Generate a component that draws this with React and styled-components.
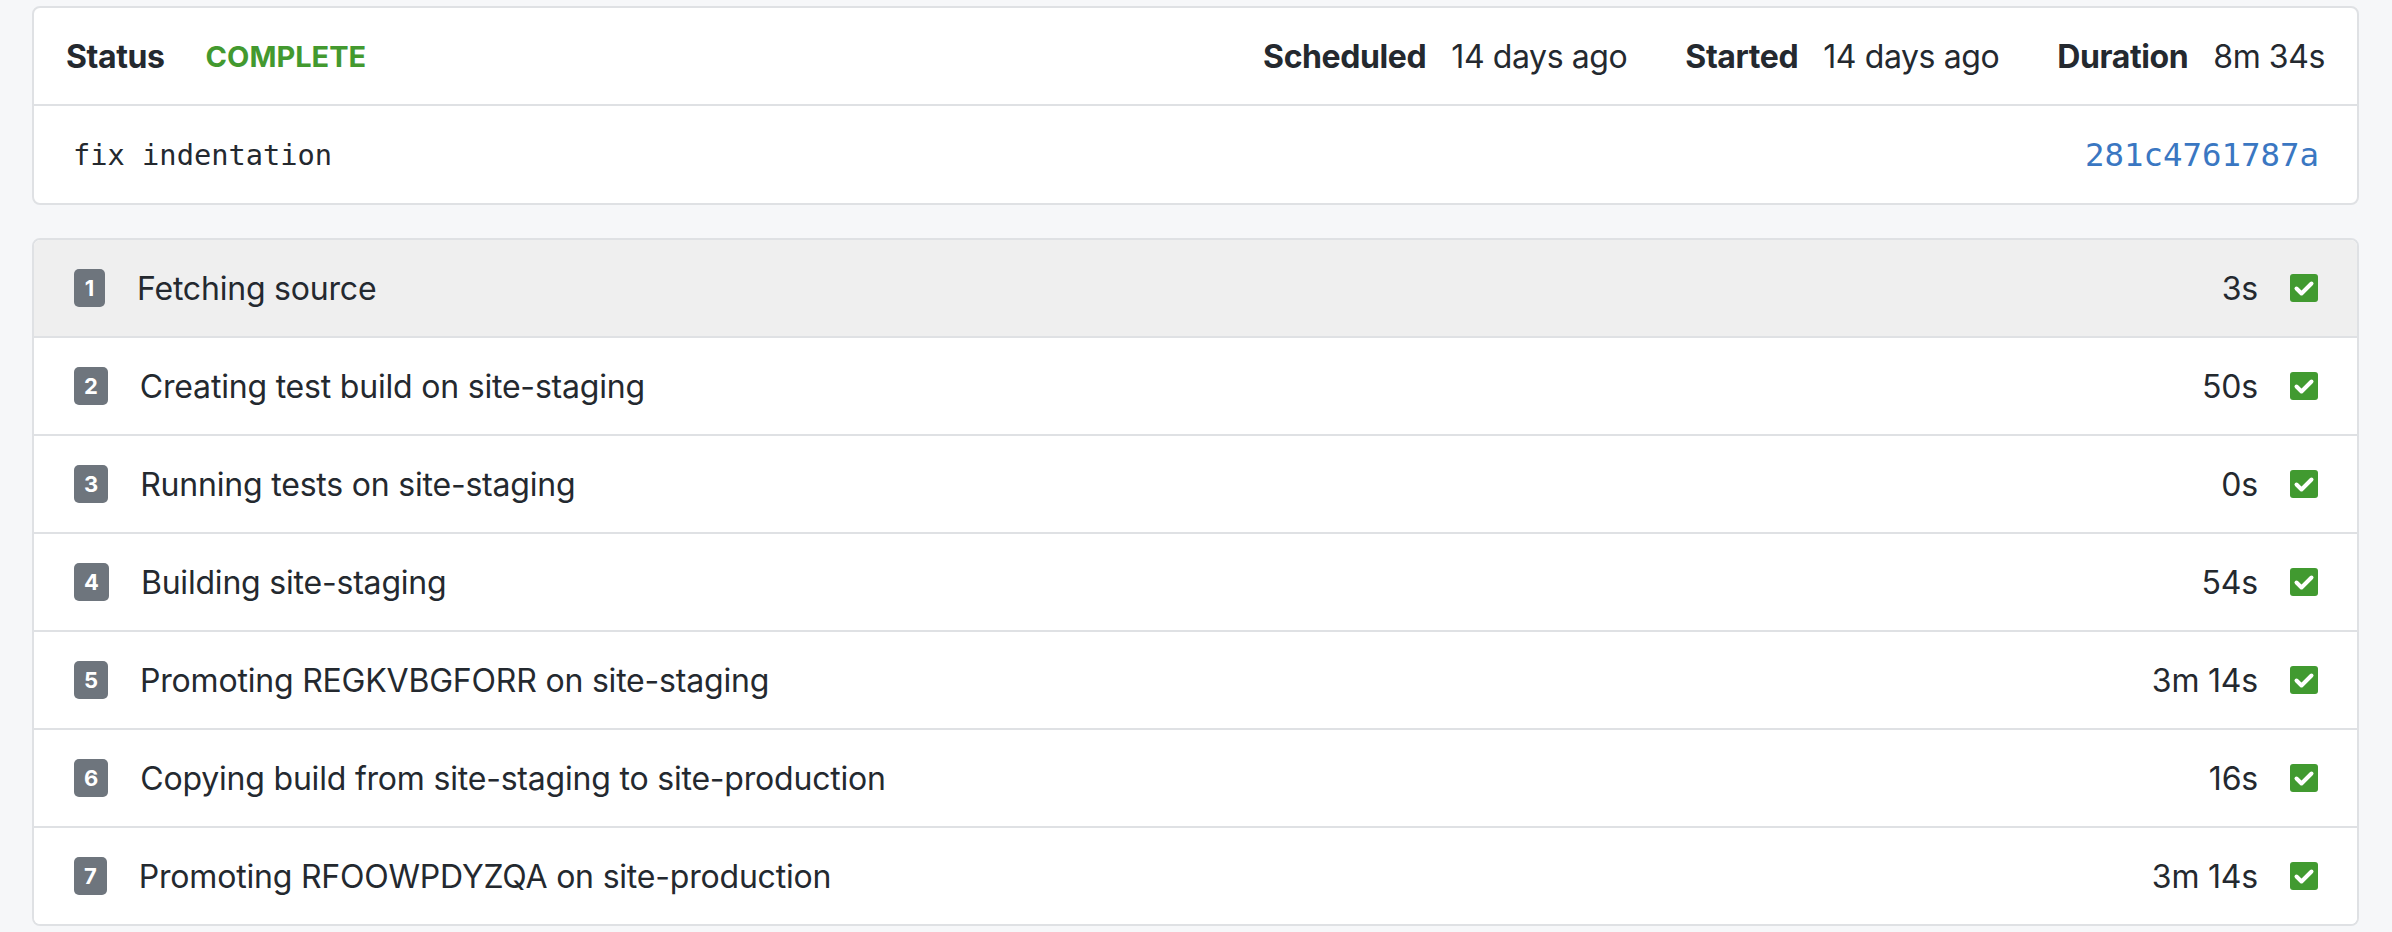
import React from 'react'
import styled, { createGlobalStyle } from 'styled-components'

const GlobalStyle = createGlobalStyle`
  body {
    margin: 0;
    background: #f6f7f9;
    font-family: Inter, "Noto Sans", "Liberation Sans", sans-serif;
    color: #24292f;
  }
`

const Page = styled.div`
  display: flex;
  flex-direction: column;
  gap: 33px;
  padding: 6px 33px 0 32px;
`

const Card = styled.div`
  background: #fff;
  border: 2px solid #dfe1e4;
  border-radius: 8px;
  overflow: hidden;
`

const SummaryRow = styled.div`
  display: flex;
  align-items: center;
  height: 96px;
  padding: 0 32px;
  border-bottom: 2px solid #dfe1e4;
  font-size: 32px;
  letter-spacing: -0.4px;
`

const Fields = styled.div`
  display: flex;
  align-items: center;
  gap: 58px;
  margin-left: auto;
`

const Field = styled.div`
  display: flex;
  align-items: center;
  gap: ${p => p.$gap || 25}px;
`

const Label = styled.span`
  font-weight: 700;
`

const Value = styled.span`
  font-weight: 400;
`

const StatusValue = styled.span`
  color: #43992f;
  font-weight: 700;
  font-size: 29px;
  letter-spacing: 0;
  text-transform: uppercase;
`

const CommitRow = styled.div`
  display: flex;
  align-items: center;
  justify-content: space-between;
  height: 97px;
  padding: 0 32px;
`

const Message = styled.code`
  font-family: "DejaVu Sans Mono", "Liberation Mono", monospace;
  font-size: 28.7px;
  padding: 0 7px;
`

const Hash = styled.a`
  font-family: "DejaVu Sans Mono", "Liberation Mono", monospace;
  font-size: 32.4px;
  color: #3a77c2;
  text-decoration: none;
  padding: 0 6px;
`

const StepRow = styled.div`
  display: flex;
  align-items: center;
  height: 96px;
  padding: 0 39px 0 40px;
  background: ${p => (p.$active ? '#efefef' : '#fff')};
  font-size: 32px;
  letter-spacing: -0.2px;

  & + & {
    border-top: 2px solid #dfe1e4;
  }
`

const Badge = styled.span`
  display: inline-flex;
  align-items: center;
  justify-content: center;
  height: 38px;
  min-width: 31px;
  box-sizing: border-box;
  padding: 0 10px;
  border-radius: 5px;
  background: #6e757d;
  color: #fff;
  font-size: 22px;
  font-weight: 700;
  letter-spacing: 0;
  margin-right: 32px;
`

const StepName = styled.span`
  flex: 1;
`

const Time = styled.span`
  margin-right: 32px;
`

const Check = () => (
  <svg width="28" height="28" viewBox="0 0 28 28">
    <rect width="28" height="28" rx="3" fill="#419a30" />
    <polyline
      points="6.5,14.5 11.5,19.5 21.5,9.5"
      fill="none"
      stroke="#fff"
      strokeWidth="4"
      strokeLinecap="round"
      strokeLinejoin="round"
    />
  </svg>
)

const steps = [
  { name: 'Fetching source', time: '3s' },
  { name: 'Creating test build on site-staging', time: '50s' },
  { name: 'Running tests on site-staging', time: '0s' },
  { name: 'Building site-staging', time: '54s' },
  { name: 'Promoting REGKVBGFORR on site-staging', time: '3m 14s' },
  { name: 'Copying build from site-staging to site-production', time: '16s' },
  { name: 'Promoting RFOOWPDYZQA on site-production', time: '3m 14s' },
]

const App = () => {
  return (
    <Page>
      <GlobalStyle />
      <Card>
        <SummaryRow>
          <Field $gap={41}>
            <Label>Status</Label>
            <StatusValue>Complete</StatusValue>
          </Field>
          <Fields>
            <Field>
              <Label>Scheduled</Label>
              <Value>14 days ago</Value>
            </Field>
            <Field>
              <Label>Started</Label>
              <Value>14 days ago</Value>
            </Field>
            <Field>
              <Label>Duration</Label>
              <Value>8m 34s</Value>
            </Field>
          </Fields>
        </SummaryRow>
        <CommitRow>
          <Message>fix indentation</Message>
          <Hash href="#">281c4761787a</Hash>
        </CommitRow>
      </Card>
      <Card>
        {steps.map((step, index) => (
          <StepRow key={index} $active={index === 0}>
            <Badge>{index + 1}</Badge>
            <StepName>{step.name}</StepName>
            <Time>{step.time}</Time>
            <Check />
          </StepRow>
        ))}
      </Card>
    </Page>
  )
}

export default App
